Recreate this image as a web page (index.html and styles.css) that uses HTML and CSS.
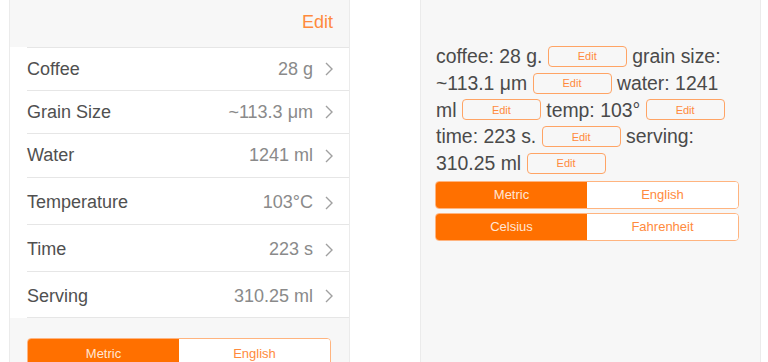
FILE: index.html
```html
<!DOCTYPE html>
<html>
<head>
<meta charset="utf-8">
<link rel="stylesheet" href="styles.css">
</head>
<body>
<div class="page">
  <section class="panel left">
    <div class="header"><span class="header-edit">Edit</span></div>
    <div class="list">
      <div class="cell h43"><div class="cell-body"><span class="label">Coffee</span><span class="value">28 g</span><svg class="chev" viewBox="0 0 8 14"><polyline points="1,1 7,7 1,13"/></svg></div></div>
      <div class="cell h43"><div class="cell-body"><span class="label">Grain Size</span><span class="value">~113.3 μm</span><svg class="chev" viewBox="0 0 8 14"><polyline points="1,1 7,7 1,13"/></svg></div></div>
      <div class="cell h44"><div class="cell-body"><span class="label">Water</span><span class="value">1241 ml</span><svg class="chev" viewBox="0 0 8 14"><polyline points="1,1 7,7 1,13"/></svg></div></div>
      <div class="cell h47 low"><div class="cell-body"><span class="label">Temperature</span><span class="value">103°C</span><svg class="chev" viewBox="0 0 8 14"><polyline points="1,1 7,7 1,13"/></svg></div></div>
      <div class="cell h47 low"><div class="cell-body"><span class="label">Time</span><span class="value">223 s</span><svg class="chev" viewBox="0 0 8 14"><polyline points="1,1 7,7 1,13"/></svg></div></div>
      <div class="cell h47 low last"><div class="cell-body"><span class="label">Serving</span><span class="value">310.25 ml</span><svg class="chev" viewBox="0 0 8 14"><polyline points="1,1 7,7 1,13"/></svg></div></div>
    </div>
    <div class="footer">
      <div class="segment tall">
        <span class="seg on">Metric</span><span class="seg off">English</span>
      </div>
    </div>
  </section>
  <section class="panel right">
    <p class="summary">
      <span class="line">coffee: 28 g. <button class="edit-btn">Edit</button> grain size:</span>
      <span class="line">~113.1 μm <button class="edit-btn">Edit</button> water: 1241</span>
      <span class="line">ml <button class="edit-btn">Edit</button> temp: 103° <button class="edit-btn">Edit</button></span>
      <span class="line">time: 223 s. <button class="edit-btn">Edit</button> serving:</span>
      <span class="line">310.25 ml <button class="edit-btn">Edit</button></span>
    </p>
    <div class="segment">
      <span class="seg on">Metric</span><span class="seg off">English</span>
    </div>
    <div class="segment">
      <span class="seg on">Celsius</span><span class="seg off">Fahrenheit</span>
    </div>
  </section>
</div>
</body>
</html>
```
FILE: styles.css
```css
* { box-sizing: border-box; }
html, body { margin: 0; padding: 0; background: #ffffff; }
body {
  font-family: "Liberation Sans", Arial, sans-serif;
  width: 768px;
  height: 362px;
  overflow: hidden;
}
.page {
  display: flex;
  gap: 70px;
  padding-left: 9px;
  height: 362px;
}
.panel {
  width: 341px;
  height: 362px;
  background: #f7f7f7;
  border-left: 1px solid #ebebeb;
  border-right: 1px solid #ebebeb;
}
.header {
  height: 47px;
  display: flex;
  align-items: center;
  justify-content: flex-end;
  padding: 0 16px 3px 0;
}
.header-edit {
  color: #ff8a3d;
  font-size: 18px;
}
.list { background: #ffffff; }
.cell {
  padding-left: 17px;
  background: #ffffff;
}
.cell-body {
  display: flex;
  align-items: center;
  height: 100%;
  border-top: 1px solid #e6e6e6;
  padding-right: 16px;
}
.cell.low .cell-body { padding-top: 3px; }
.cell.last .cell-body { border-bottom: 1px solid #e6e6e6; }
.h43 { height: 43px; }
.h44 { height: 44px; }
.h47 { height: 47px; }
.label {
  flex: 1;
  font-size: 18px;
  color: #505050;
}
.value {
  font-size: 18px;
  color: #8a8a8a;
}
.chev {
  width: 8px;
  height: 14px;
  margin-left: 12px;
  fill: none;
  stroke: #a0a0a0;
  stroke-width: 1.4;
}
.footer {
  padding: 20px 0 0 17px;
}
.segment {
  display: flex;
  width: 304px;
  height: 28px;
  border: 1px solid #ffb47f;
  border-radius: 4px;
  overflow: hidden;
  background: #ffffff;
}
.segment.tall { height: 31px; }
.seg {
  flex: 1;
  display: flex;
  align-items: center;
  justify-content: center;
  font-size: 13px;
}
.seg.on { background: #ff7000; color: #ffe6d6; }
.seg.off { background: #ffffff; color: #ff8a3d; }
.right {
  padding: 43px 22px 0 14px;
}
.summary {
  margin: 0 0 4px 1px;
  font-size: 19.4px;
  line-height: 26.75px;
  color: #4a4a4a;
}
.line {
  display: block;
  white-space: nowrap;
}
.edit-btn {
  display: inline-block;
  width: 79px;
  height: 21px;
  vertical-align: middle;
  border: 1.5px solid #ffa465;
  border-radius: 4px;
  background: transparent;
  color: #ff8a3d;
  font-family: "Liberation Sans", Arial, sans-serif;
  font-size: 11px;
  padding: 0;
  margin-top: -3px;
}
.right .segment { margin-bottom: 4px; }
```
